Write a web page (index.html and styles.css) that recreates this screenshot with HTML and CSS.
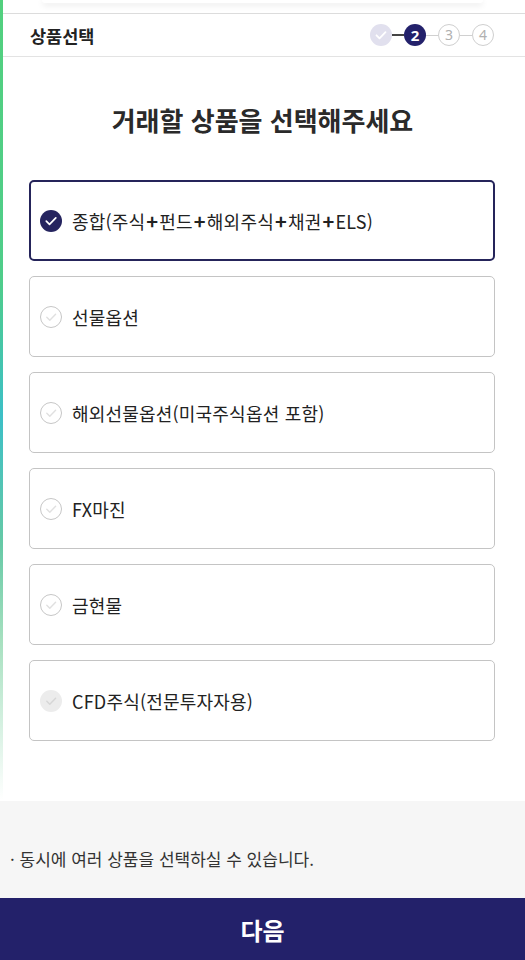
FILE: index.html
```html
<!DOCTYPE html>
<html lang="ko">
<head>
<meta charset="utf-8">
<title>상품선택</title>
<link rel="stylesheet" href="styles.css">
</head>
<body>
<div class="page">
  <div class="stripe"></div>
  <div class="topcard"></div>
  <header class="head">
    <h1 class="head-title">상품선택</h1>
    <ol class="steps">
      <li class="step done"><svg viewBox="0 0 22 22" width="22" height="22"><circle cx="11" cy="11" r="11" fill="#e1e0ee"/><path d="M6.5 11.3l3 3 6-6.2" fill="none" stroke="#fff" stroke-width="1.8" stroke-linecap="round" stroke-linejoin="round"/></svg></li>
      <li class="bar dark"></li>
      <li class="step cur">2</li>
      <li class="bar"></li>
      <li class="step">3</li>
      <li class="bar"></li>
      <li class="step">4</li>
    </ol>
  </header>

  <h2 class="title">거래할 상품을 선택해주세요</h2>

  <ul class="options">
    <li class="opt selected">
      <svg class="chk" viewBox="0 0 22 22" width="22" height="22"><circle cx="11" cy="11" r="11" fill="#25245f"/><path d="M6.3 11.2l3.2 3.2 6.3-6.6" fill="none" stroke="#fff" stroke-width="1.7" stroke-linecap="round" stroke-linejoin="round"/></svg>
      <span class="label">종합(주식<span class="plus">+</span>펀드<span class="plus">+</span>해외주식<span class="plus">+</span>채권<span class="plus">+</span>ELS)</span>
    </li>
    <li class="opt">
      <svg class="chk" viewBox="0 0 22 22" width="22" height="22"><circle cx="11" cy="11" r="10.5" fill="#fff" stroke="#c6c6c6" stroke-width="1"/><path d="M6.8 11.3l3 3 5.8-6.1" fill="none" stroke="#e0e0e0" stroke-width="1.4" stroke-linecap="round" stroke-linejoin="round"/></svg>
      <span class="label">선물옵션</span>
    </li>
    <li class="opt">
      <svg class="chk" viewBox="0 0 22 22" width="22" height="22"><circle cx="11" cy="11" r="10.5" fill="#fff" stroke="#c6c6c6" stroke-width="1"/><path d="M6.8 11.3l3 3 5.8-6.1" fill="none" stroke="#e0e0e0" stroke-width="1.4" stroke-linecap="round" stroke-linejoin="round"/></svg>
      <span class="label">해외선물옵션(미국주식옵션 포함)</span>
    </li>
    <li class="opt">
      <svg class="chk" viewBox="0 0 22 22" width="22" height="22"><circle cx="11" cy="11" r="10.5" fill="#fff" stroke="#c6c6c6" stroke-width="1"/><path d="M6.8 11.3l3 3 5.8-6.1" fill="none" stroke="#e0e0e0" stroke-width="1.4" stroke-linecap="round" stroke-linejoin="round"/></svg>
      <span class="label">FX마진</span>
    </li>
    <li class="opt">
      <svg class="chk" viewBox="0 0 22 22" width="22" height="22"><circle cx="11" cy="11" r="10.5" fill="#fff" stroke="#c6c6c6" stroke-width="1"/><path d="M6.8 11.3l3 3 5.8-6.1" fill="none" stroke="#e0e0e0" stroke-width="1.4" stroke-linecap="round" stroke-linejoin="round"/></svg>
      <span class="label">금현물</span>
    </li>
    <li class="opt">
      <svg class="chk" viewBox="0 0 22 22" width="22" height="22"><circle cx="11" cy="11" r="11" fill="#ececec"/><path d="M6.8 11.3l3 3 5.8-6.1" fill="none" stroke="#d6d6d6" stroke-width="1.4" stroke-linecap="round" stroke-linejoin="round"/></svg>
      <span class="label">CFD주식(전문투자자용)</span>
    </li>
  </ul>

  <section class="note">
    <p>· 동시에 여러 상품을 선택하실 수 있습니다.</p>
  </section>

  <button class="next" type="button">다음</button>
</div>
</body>
</html>
```

FILE: styles.css
```css
* { box-sizing: border-box; }
html, body { margin: 0; padding: 0; background: #fff; }
body {
  font-family: "Noto Sans CJK KR", "Noto Sans", sans-serif;
  color: #222;
}
.page {
  position: relative;
  width: 525px;
  min-height: 960px;
  display: flex;
  flex-direction: column;
  overflow: hidden;
}
.stripe {
  position: absolute;
  left: 0;
  top: 0;
  width: 3px;
  height: 800px;
  background: linear-gradient(to bottom, #52d07e 0%, #4fcd8a 35%, #3cbfc6 52%, #66c9a6 68%, #a6e0bf 80%, rgba(255,255,255,0) 100%);
}
.topcard {
  height: 3px;
  margin: 0 42px 10px;
  background: #fff;
  border-radius: 0 0 14px 14px;
  box-shadow: 0 2px 6px rgba(0,0,0,0.12);
}
.head {
  height: 44px;
  border-top: 1px solid #dcdcdc;
  border-bottom: 1px solid #e3e3e3;
  display: flex;
  align-items: center;
  justify-content: space-between;
  padding: 0 31px 0 30px;
}
.head-title {
  margin: 0;
  font-size: 17.5px;
  font-weight: 700;
  color: #222;
}
.steps {
  list-style: none;
  margin: 0;
  padding: 0;
  display: flex;
  align-items: center;
}
.step {
  width: 22px;
  height: 22px;
  border-radius: 50%;
  border: 1px solid #cfcfcf;
  background: #fff;
  color: #b0b0b0;
  font-family: "Noto Sans", sans-serif;
  font-size: 14px;
  line-height: 20px;
  text-align: center;
  display: flex;
  align-items: center;
  justify-content: center;
}
.step.done { border: none; background: none; }
.step.done svg { display: block; }
.step.cur {
  border: none;
  background: #23216b;
  color: #fff;
  font-weight: 700;
  font-size: 15px;
}
.bar {
  width: 12px;
  height: 1px;
  background: #d0d0d0;
}
.bar.dark { background: #444; height: 1.5px; }
.title {
  margin: 45px 0 42px;
  text-align: center;
  font-size: 26px;
  line-height: 36px;
  font-weight: 700;
  color: #2a2a2a;
}
.options {
  list-style: none;
  margin: 0 30px 0 29px;
  padding: 0;
  display: flex;
  flex-direction: column;
  gap: 15px;
}
.opt {
  height: 81px;
  border: 1px solid #c4c4c4;
  border-radius: 5px;
  display: flex;
  align-items: center;
  padding-left: 10px;
  gap: 10px;
}
.opt.selected {
  border: 2px solid #25245a;
  padding-left: 9px;
}
.chk { flex: none; display: block; }
.label {
  font-size: 18px;
  color: #222;
  letter-spacing: 0.2px;
  line-height: 24px;
}
.plus { margin: 0 1px; font-weight: 700; font-size: 20px; }
.note {
  margin-top: 60px;
  height: 97px;
  background: #f6f6f6;
  padding: 47px 10px 0;
}
.note p {
  margin: 0;
  font-size: 17px;
  line-height: 22px;
  color: #333;
}
.next {
  height: 63px;
  width: 100%;
  border: none;
  margin: 0;
  background: #23216a;
  color: #fff;
  font-family: "Noto Sans CJK KR", sans-serif;
  font-size: 24px;
  font-weight: 700;
  padding: 0;
}
```
